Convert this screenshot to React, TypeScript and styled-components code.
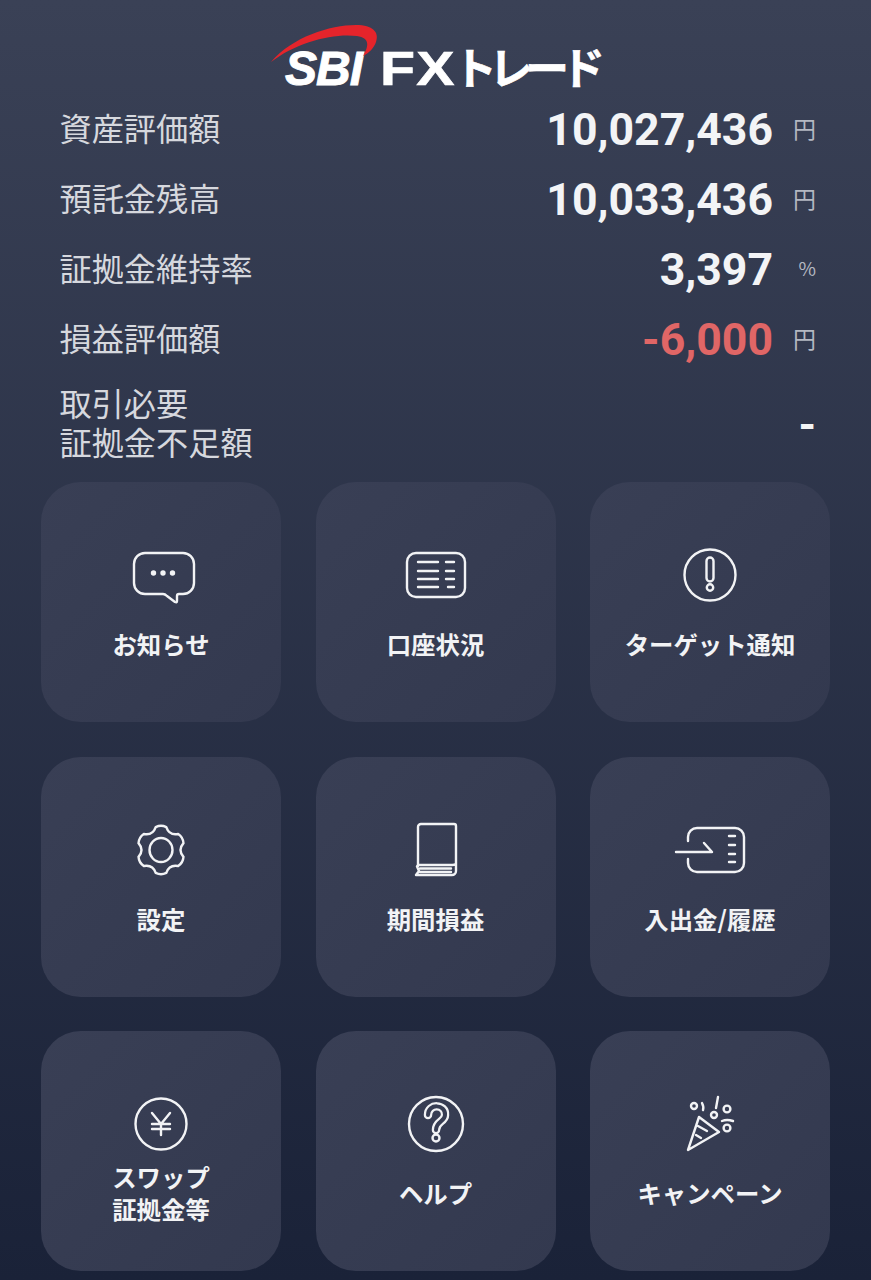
import * as React from 'react';
import styled, { createGlobalStyle } from 'styled-components';

const Global = createGlobalStyle`
  html, body {
    margin: 0;
    padding: 0;
    background: #1a2238;
  }
  body {
    font-family: "Noto Sans CJK JP", "Noto Sans", sans-serif;
  }
`;

const Page = styled.div`
  width: 871px;
  height: 1280px;
  overflow: hidden;
  background: linear-gradient(180deg, #3a4156 0%, #1a2238 100%);
`;

const Header = styled.div`
  height: 95px;
  display: flex;
  justify-content: center;
`;

const Logo = styled.div`
  position: relative;
  width: 330px;
  height: 95px;
  margin-left: 1px;
  display: flex;
  align-items: flex-start;
  color: #fff;
`;

const Swoosh = styled.svg`
  position: absolute;
  left: 0;
  top: 22px;
`;

const Sbi = styled.span`
  margin: 42px 0 0 14px;
  font-family: "Liberation Sans", sans-serif;
  font-size: 48px;
  line-height: 54px;
  font-weight: 700;
  font-style: italic;
  letter-spacing: -1px;
  -webkit-text-stroke: 1px #fff;
`;

const BrandLatin = styled.span`
  display: inline-block;
  width: 76px;
  margin: 41px 0 0 18px;
  font-family: "Liberation Sans", sans-serif;
  font-size: 49px;
  line-height: 54px;
  font-weight: 700;
  letter-spacing: 1px;
  white-space: nowrap;
  transform: scaleX(1.17);
  transform-origin: left center;
  -webkit-text-stroke: 0.6px #fff;
`;

const BrandKana = styled.span`
  margin: 36px 0 0 -3px;
  font-size: 44px;
  line-height: 60px;
  font-weight: 700;
  letter-spacing: -8px;
  white-space: nowrap;
  -webkit-text-stroke: 0.6px #fff;
`;

const Summary = styled.div`
  padding: 0 55px 0 59.500px;
`;

const Row = styled.div<{ $tall?: boolean }>`
  height: ${(p) => (p.$tall ? '94px' : '70px')};
  display: flex;
  align-items: center;
`;

const Label = styled.div<{ $tall?: boolean }>`
  flex: 1;
  padding-bottom: ${(p) => (p.$tall ? '0' : '5px')};
  font-size: 32.200px;
  line-height: 39px;
  font-weight: 400;
  color: #d6d8de;
`;

const Value = styled.div<{ $red?: boolean; $dash?: boolean }>`
  font-family: Roboto, "Noto Sans", sans-serif;
  font-size: 44.600px;
  font-weight: 700;
  padding-top: ${(p) => (p.$dash ? '5px' : '0')};
  color: ${(p) => (p.$red ? '#e06666' : '#f3f4f6')};
`;

const Unit = styled.div<{ $small?: boolean }>`
  width: 43px;
  text-align: right;
  padding-bottom: 5px;
  font-size: ${(p) => (p.$small ? '19px' : '23px')};
  color: #b4b8c2;
`;

const Grid = styled.div`
  margin: 13px 41px 0 41px;
  display: grid;
  grid-template-columns: repeat(3, 240px);
  grid-auto-rows: 240px;
  column-gap: 34.5px;
  row-gap: 34.5px;
`;

const Card = styled.div`
  border-radius: 40px;
  background: linear-gradient(135deg, #393f55 0%, #33394f 100%);
  display: flex;
  flex-direction: column;
  align-items: center;
  padding-top: 63px;
  box-sizing: border-box;
`;

const IconBox = styled.div`
  height: 60px;
  width: 100%;
  display: flex;
  align-items: center;
  justify-content: center;
`;

const CardLabel = styled.div`
  height: 64px;
  margin-top: 7px;
  display: flex;
  align-items: center;
  text-align: center;
  font-size: 24.4px;
  line-height: 32px;
  font-weight: 700;
  color: #f2f3f5;
`;

const Line = styled.svg.attrs({
  fill: 'none',
  stroke: '#f2f3f5',
  strokeWidth: 2.4,
  strokeLinecap: 'round',
  strokeLinejoin: 'round',
})``;

const ChatLine = styled(Line)`
  margin: 5px 0 0 5px;
`;

const ChatIcon = () => (
  <ChatLine width="64" height="56" viewBox="0 0 64 56">
    <path d="M13 3H51a11 11 0 0 1 11 11V33a11 11 0 0 1-11 11H47q-2 0-2 2v5q0 2-2 1l-8-6q-2-2-4-2H13A11 11 0 0 1 2 33V14A11 11 0 0 1 13 3z" />
    <circle cx="21.500" cy="23" r="1.500" fill="#f2f3f5" />
    <circle cx="31" cy="23" r="1.500" fill="#f2f3f5" />
    <circle cx="40.500" cy="23" r="1.500" fill="#f2f3f5" />
  </ChatLine>
);

const DocIcon = () => (
  <Line width="62" height="48" viewBox="0 0 62 48">
    <rect x="2" y="2" width="58" height="44" rx="9" />
    <path d="M13 11H33M41 11H49M13 20H33M41 20H49M13 28H33M41 28H49M13 36H33M43 36H49" />
  </Line>
);

const AlertIcon = () => (
  <Line width="54" height="54" viewBox="0 0 54 54">
    <circle cx="27" cy="27" r="25.500" />
    <rect x="23.500" y="9.500" width="7" height="24" rx="3.500" />
    <circle cx="27" cy="39.500" r="3.200" />
  </Line>
);

const gearPath = () => {
  const cx = 25;
  const cy = 26;
  const pt = (deg: number, r: number) => {
    const a = ((deg - 90) * Math.PI) / 180;
    return `${(cx + r * Math.cos(a)).toFixed(2)} ${(cy + r * Math.sin(a)).toFixed(2)}`;
  };
  let d = `M${pt(-13, 23.5)}`;
  for (let i = 0; i < 6; i++) {
    const t = i * 60;
    d += `Q${pt(t, 25.5)} ${pt(t + 13, 23.5)}`;
    d += `Q${pt(t + 30, 16.5)} ${pt(t + 47, 23.5)}`;
  }
  return d + 'z';
};

const GearIcon = () => (
  <Line width="50" height="52" viewBox="0 0 50 52">
    <path d={gearPath()} />
    <ellipse cx="25" cy="26" rx="11.500" ry="12" />
  </Line>
);

const BookIcon = () => (
  <Line width="44" height="56" viewBox="0 0 44 56">
    <path d="M4 44V5a3 3 0 0 1 3-3H40a2 2 0 0 1 2 2V49a4 4 0 0 1-4 4H2l3-4-2-4.500L4 43H38q4 0 4-2" />
    <path d="M6 46.500H37M6 50H37" />
  </Line>
);

const DepositIcon = () => (
  <Line width="74" height="48" viewBox="0 0 74 48">
    <path d="M15 15V11a9 9 0 0 1 9-9H62a9 9 0 0 1 9 9V37a9 9 0 0 1-9 9H24a9 9 0 0 1-9-9V33" />
    <path d="M3 26H39L31 17" />
    <path d="M56 10H62M56 19H62M56 28H62M56 36H62" />
  </Line>
);

const YenIcon = () => (
  <Line width="54" height="54" viewBox="0 0 54 54">
    <circle cx="27" cy="27" r="25.500" />
    <path d="M18 16L27 27L36 16M27 27V38M18 27H36M18 32H36" />
  </Line>
);

const HelpIcon = () => (
  <Line width="58" height="58" viewBox="0 0 58 58">
    <circle cx="29" cy="29" r="27" />
    <path d="M21 20C21 8 39 9 38 20C38 27 29 26 29 35" strokeWidth="8.500" />
    <path d="M21 20C21 8 39 9 38 20C38 27 29 26 29 35" strokeWidth="4" stroke="#373d53" />
    <circle cx="29" cy="43" r="3.500" />
  </Line>
);

const PartyIcon = () => (
  <Line width="50" height="58" viewBox="0 0 50 58">
    <path d="M3 55L14 22L34 37z" />
    <path d="M13 31L22 36M11 40L16 43" />
    <circle cx="9" cy="11" r="3" />
    <circle cx="29" cy="20" r="3" />
    <circle cx="42" cy="14" r="3.400" />
    <circle cx="42" cy="33" r="3.400" />
    <path d="M17 8Q19 12 18 15M33 2L31 13M37 26Q42 24 48 26" />
  </Line>
);

const menu: { label: React.ReactNode; icon: React.ReactNode }[] = [
  { label: 'お知らせ', icon: <ChatIcon /> },
  { label: '口座状況', icon: <DocIcon /> },
  { label: 'ターゲット通知', icon: <AlertIcon /> },
  { label: '設定', icon: <GearIcon /> },
  { label: '期間損益', icon: <BookIcon /> },
  { label: '入出金/履歴', icon: <DepositIcon /> },
  { label: <>スワップ<br />証拠金等</>, icon: <YenIcon /> },
  { label: 'ヘルプ', icon: <HelpIcon /> },
  { label: 'キャンペーン', icon: <PartyIcon /> },
];

export default function App() {
  return (
    <Page>
      <Global />
      <Header>
        <Logo>
          <Swoosh width="110" height="42" viewBox="0 0 110 42">
            <path
              d="M0 40C22 14 62 2 88 3C104 4 108 12 105 20C103 26 98 31 92 34C98 24 99 16 86 14C62 11 26 20 0 40z"
              fill="#e5242b"
            />
          </Swoosh>
          <Sbi>SBI</Sbi>
          <BrandLatin>FX</BrandLatin>
          <BrandKana>トレード</BrandKana>
        </Logo>
      </Header>
      <Summary>
        <Row>
          <Label>資産評価額</Label>
          <Value>10,027,436</Value>
          <Unit>円</Unit>
        </Row>
        <Row>
          <Label>預託金残高</Label>
          <Value>10,033,436</Value>
          <Unit>円</Unit>
        </Row>
        <Row>
          <Label>証拠金維持率</Label>
          <Value>3,397</Value>
          <Unit $small>%</Unit>
        </Row>
        <Row>
          <Label>損益評価額</Label>
          <Value $red>-6,000</Value>
          <Unit>円</Unit>
        </Row>
        <Row $tall>
          <Label $tall>
            取引必要
            <br />
            証拠金不足額
          </Label>
          <Value $dash>-</Value>
        </Row>
      </Summary>
      <Grid>
        {menu.map((item, i) => (
          <Card key={i}>
            <IconBox>{item.icon}</IconBox>
            <CardLabel>
              <div>{item.label}</div>
            </CardLabel>
          </Card>
        ))}
      </Grid>
    </Page>
  );
}
